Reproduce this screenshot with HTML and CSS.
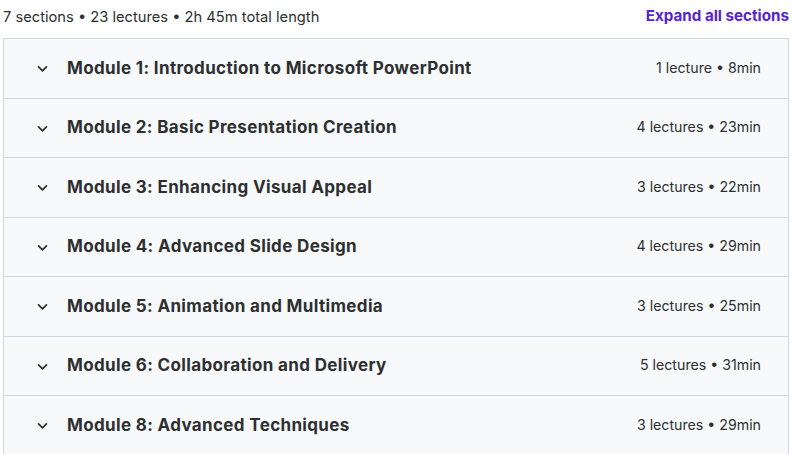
FILE: index.html
```html
<!DOCTYPE html>
<html lang="en">
<head>
<meta charset="utf-8">
<title>Course content</title>
<link rel="stylesheet" href="styles.css">
</head>
<body>
<div class="curriculum">
  <div class="summary">
    <span class="summary-text">7 sections • 23 lectures • 2h 45m total length</span>
    <button class="expand-all">Expand all sections</button>
  </div>
  <div class="sections">
    <div class="section">
      <svg class="chevron" viewBox="0 0 24 24"><path d="M7 10l5 5 5-5"/></svg>
      <span class="title">Module 1: Introduction to Microsoft PowerPoint</span>
      <span class="meta">1 lecture • 8min</span>
    </div>
    <div class="section">
      <svg class="chevron" viewBox="0 0 24 24"><path d="M7 10l5 5 5-5"/></svg>
      <span class="title">Module 2: Basic Presentation Creation</span>
      <span class="meta">4 lectures • 23min</span>
    </div>
    <div class="section">
      <svg class="chevron" viewBox="0 0 24 24"><path d="M7 10l5 5 5-5"/></svg>
      <span class="title">Module 3: Enhancing Visual Appeal</span>
      <span class="meta">3 lectures • 22min</span>
    </div>
    <div class="section">
      <svg class="chevron" viewBox="0 0 24 24"><path d="M7 10l5 5 5-5"/></svg>
      <span class="title">Module 4: Advanced Slide Design</span>
      <span class="meta">4 lectures • 29min</span>
    </div>
    <div class="section">
      <svg class="chevron" viewBox="0 0 24 24"><path d="M7 10l5 5 5-5"/></svg>
      <span class="title">Module 5: Animation and Multimedia</span>
      <span class="meta">3 lectures • 25min</span>
    </div>
    <div class="section">
      <svg class="chevron" viewBox="0 0 24 24"><path d="M7 10l5 5 5-5"/></svg>
      <span class="title">Module 6: Collaboration and Delivery</span>
      <span class="meta">5 lectures • 31min</span>
    </div>
    <div class="section">
      <svg class="chevron" viewBox="0 0 24 24"><path d="M7 10l5 5 5-5"/></svg>
      <span class="title">Module 8: Advanced Techniques</span>
      <span class="meta">3 lectures • 29min</span>
    </div>
  </div>
</div>
</body>
</html>
```
FILE: styles.css
```css
html, body {
  margin: 0;
  padding: 0;
  background: #ffffff;
}

body {
  font-family: Inter, "Noto Sans", "Liberation Sans", sans-serif;
  color: #2d2f31;
  overflow: hidden;
}

.curriculum {
  padding: 0 3px;
}

.summary {
  height: 38px;
  display: flex;
  align-items: flex-start;
  justify-content: space-between;
  padding-top: 7px;
  box-sizing: border-box;
}

.summary-text {
  font-size: 14.7px;
  line-height: 20px;
  color: #2d2f31;
}

.expand-all {
  border: 0;
  background: none;
  padding: 0;
  font-family: inherit;
  font-size: 15.2px;
  font-weight: 700;
  line-height: 20px;
  color: #5624d0;
  cursor: pointer;
  margin-top: -1px;
}

.sections {
  border: 1px solid #d1d7dc;
  border-bottom: 0;
}

.section {
  display: flex;
  align-items: center;
  height: 59.5px;
  box-sizing: border-box;
  background: #f7f9fa;
  border-bottom: 1px solid #d1d7dc;
  padding: 0 27px 0 29px;
}

.chevron {
  width: 19px;
  height: 19px;
  fill: none;
  stroke: #2d2f31;
  stroke-width: 2.2;
  stroke-linecap: round;
  stroke-linejoin: round;
  flex: none;
  margin-right: 15px;
  margin-top: 1px;
}

.title {
  flex: 1;
  font-size: 17px;
  font-weight: 700;
  letter-spacing: 0.35px;
  line-height: 20px;
  margin-top: -1px;
}

.meta {
  font-size: 14.2px;
  line-height: 20px;
  color: #2d2f31;
  margin-top: -1px;
}
```
